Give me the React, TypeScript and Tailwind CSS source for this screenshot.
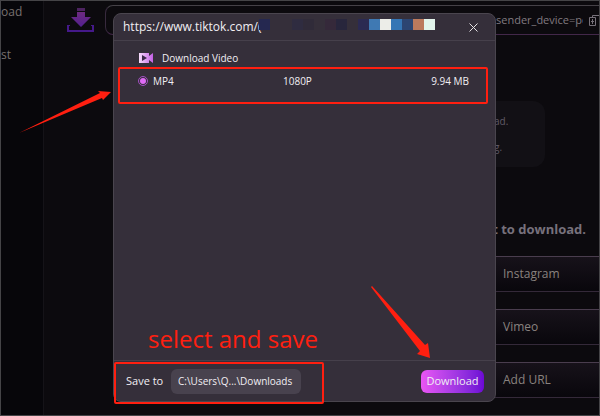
import { clsx } from 'clsx';

const sites = ['Instagram', 'Vimeo', 'Add URL'];

const mosaic = [
  'bg-[#252850]',
  'bg-transparent',
  'bg-transparent',
  'bg-[#2f2c40]',
  'bg-[#302b39]',
  'bg-transparent',
  'bg-[#35293a]',
  'bg-[#28263c]',
  'bg-transparent',
  'bg-[#2b2a52]',
  'bg-[#3f79b3]',
  'bg-[#ecede8]',
  'bg-[#3576b5]',
  'bg-[#2c4572]',
  'bg-[#bc7a5d]',
  'bg-[#e3f5ec]',
];

function Logo() {
  return (
    <svg width="28" height="28" viewBox="0 0 28 28" aria-hidden className="shrink-0">
      <defs>
        <linearGradient id="logo" x1="0" y1="0" x2="0" y2="1">
          <stop offset="0" stopColor="#6d2a80" />
          <stop offset="1" stopColor="#53208f" />
        </linearGradient>
      </defs>
      <path d="M10 3h8v3h-8z" fill="#4d2360" />
      <path d="M10 7h8v5h6L14 22 4 12h6z" fill="url(#logo)" />
      <path d="M0 20h3v1H2v4h23v-4h-1v-1h3v7H0z" fill="#45198a" />
    </svg>
  );
}

function VideoIcon() {
  return (
    <svg width="15" height="12" viewBox="0 0 15 12" aria-hidden>
      <defs>
        <linearGradient id="cam" x1="0" y1="0" x2="1" y2="0">
          <stop offset="0" stopColor="#f6dcfb" />
          <stop offset="1" stopColor="#c45fe6" />
        </linearGradient>
      </defs>
      <path d="M0 1h10v3l4-3v10l-4-3v3H0z" fill="url(#cam)" />
      <path d="M3 3l5 3-5 3z" fill="#3a2848" />
    </svg>
  );
}

function PasteIcon() {
  return (
    <svg width="10" height="11" viewBox="0 0 10 11" fill="none" stroke="#77717a" aria-hidden>
      <path d="M3.500 2V.5H10" />
      <path d="M.5 2.500h6v8h-6zM3.500 4v5M2 6.500h3" />
    </svg>
  );
}

function Background() {
  return (
    <>
      <aside className="flex w-[43px] shrink-0 flex-col gap-[27px] border-r border-[#151318] bg-[#07060a] pt-[3px] text-[12px] leading-4 text-[#77706f]">
        <a href="#download">oad</a>
        <a href="#list">st</a>
      </aside>

      <main className="flex min-w-0 flex-1 flex-col bg-[#0c0a0e]">
        <div className="flex pt-1 pl-[23px]">
          <Logo />
          <div className="ml-[10px] flex h-[30px] flex-1 items-center gap-[6px] rounded-l-lg border border-r-0 border-t-[#454147] border-b-[#43284a] border-l-[#382a3e]">
            <input
              aria-label="Video URL"
              defaultValue="sender_device=pc"
              className="ml-auto w-[87px] bg-transparent text-[11px] text-[#817b80] outline-none"
            />
            <button type="button" aria-label="Paste">
              <PasteIcon />
            </button>
          </div>
        </div>

        <div className="mt-[66px] mr-[54px] ml-[76px] flex h-[66px] flex-col items-end justify-between rounded-xl bg-[#121015] py-3 text-[10px] leading-4 text-[#615b69]">
          <p className="w-[51px]">ad.</p>
          <p className="w-[51px]">g.</p>
        </div>

        <h2 className="mt-[54px] self-end pr-[13px] text-[13px] leading-4 font-bold text-[#77717c]">
          t to download.
        </h2>

        <div className="mt-[19px] flex flex-col gap-[17px] pb-4 pl-[76px]">
          {sites.map((site) => (
            <button
              key={site}
              type="button"
              className="flex h-9 items-center justify-end border-t border-b border-t-[#4a3d4e] border-b-[#342939] bg-linear-to-b from-[#17121a] to-[#09070c] text-left text-[12px] text-[#89827f]"
            >
              <span className="w-24">{site}</span>
            </button>
          ))}
        </div>
      </main>
    </>
  );
}

function DownloadDialog() {
  return (
    <div
      role="dialog"
      aria-label="Download Video"
      className="absolute top-3 right-[103px] bottom-[13px] left-[112px] flex flex-col rounded-lg border border-[#4a454e] bg-[#352f3a] text-[#f1eef3]"
    >
      <header className="flex h-[27px] shrink-0 items-center border-b border-[#46404b] pl-[9px]">
        <span className="w-[136px] shrink-0 text-[12px] whitespace-nowrap">
          https://www.tiktok.com/(
        </span>
        <div className="mb-[6px] flex h-[11px]">
          {mosaic.map((color, i) => (
            <span key={i} className={clsx('w-[11px]', color)} />
          ))}
        </div>
        <button type="button" aria-label="Close" className="mr-[17px] ml-auto">
          <svg width="9" height="9" viewBox="0 0 9 9" stroke="#e6e2e4" aria-hidden>
            <path d="M.5.5l8 8M8.500.5l-8 8" />
          </svg>
        </button>
      </header>

      <div className="flex-1 px-1 pt-[9px]">
        <h1 className="flex items-center gap-2 pl-[21px] text-[10px] leading-4">
          <VideoIcon />
          Download Video
        </h1>
        <label className="mr-[3px] mt-[1px] grid h-[37px] grid-cols-[130px_1fr_auto] items-start rounded-xs border-2 border-[#ff1f10] pt-1 pr-[17px] pl-[18px] text-[10px] leading-4">
          <span className="flex items-center gap-[5px]">
            <input
              type="radio"
              name="quality"
              defaultChecked
              className="size-[10px] appearance-none rounded-full border border-[#a44fc4] bg-[#df6bf5] bg-clip-content p-[1px]"
            />
            MP4
          </span>
          <span className="pl-[15px]">1080P</span>
          <span>9.94 MB</span>
        </label>
      </div>

      <footer className="flex h-[41px] shrink-0 items-center border-t border-[#46404b] pr-[11px] pl-3">
        <label htmlFor="folder" className="w-[45px] text-[11px] whitespace-nowrap">
          Save to
        </label>
        <input
          id="folder"
          readOnly
          value="C:\Users\Q...\Downloads"
          className="h-[25px] w-[130px] rounded-md bg-[#48424e] px-[7px] text-[10px] outline-none"
        />
        <button
          type="button"
          className="ml-auto h-[23px] w-[63px] rounded-md bg-linear-to-r from-[#ea55f4] to-[#6d07d4] text-[11px]"
        >
          Download
        </button>
      </footer>

      <p className="pointer-events-none absolute bottom-11 left-[34px] text-[24px] leading-9 text-[#ff1f10]">
        select and save
      </p>
      <div className="pointer-events-none absolute -bottom-[3px] left-0 h-[42px] w-[210px] rounded-xs border-2 border-[#ff1f10]" />
      <svg
        className="pointer-events-none absolute right-[62px] bottom-[41px]"
        width="62"
        height="74"
        viewBox="0 0 62 74"
        fill="#ff1f10"
        aria-hidden
      >
        <path d="M0 1L1 0 54 59l3-2 2 15-13-4 3-3z" />
      </svg>
      <svg
        className="pointer-events-none absolute top-[75px] right-full"
        width="96"
        height="46"
        viewBox="0 0 96 46"
        fill="#ff1f10"
        aria-hidden
      >
        <path d="M1 44L82 4l-2-2 13 1-8 8-1-2z" />
      </svg>
    </div>
  );
}

export default function App() {
  return (
    <div className="relative flex min-h-screen overflow-hidden border border-[#454447] bg-[#0c0a0e] font-['Open_Sans','Noto_Sans',sans-serif]">
      <Background />
      <DownloadDialog />
    </div>
  );
}
